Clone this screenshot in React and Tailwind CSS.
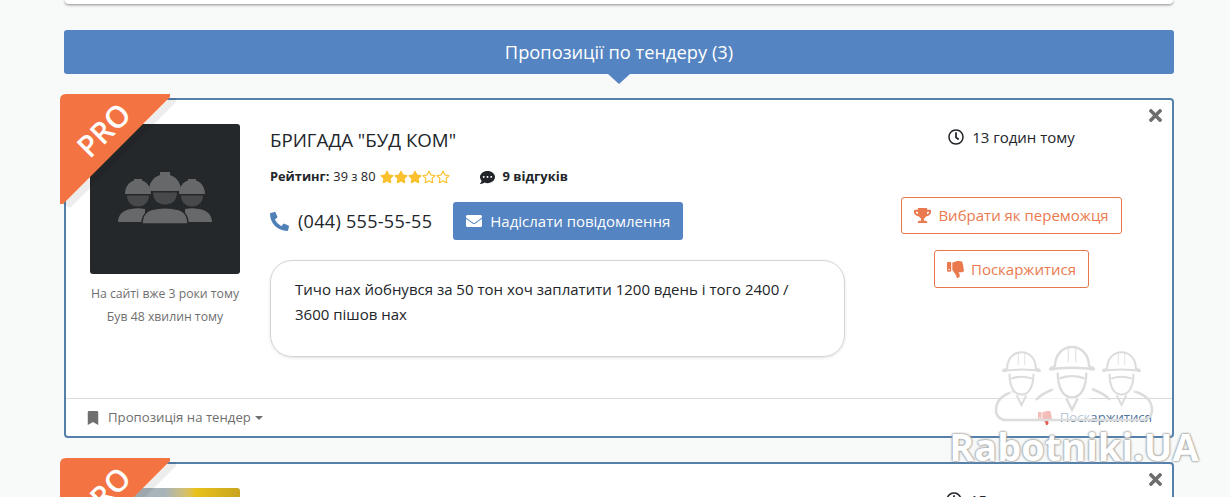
import {
  FaBookmark,
  FaCommentDots,
  FaEnvelope,
  FaPhoneAlt,
  FaRegClock,
  FaRegStar,
  FaStar,
  FaThumbsDown,
  FaTimes,
  FaTrophy,
} from "react-icons/fa";

function Workers({ className }) {
  return (
    <svg viewBox="0 0 94 52" className={className}>
      <g fill="#666869">
        <path d="M0 50c0-7 5-12 13-13 5-1 9-1 14 0v13z" />
        <path d="M94 50c0-7-5-12-13-13-5-1-9-1-14 0v13z" />
        <path d="M7 22c0-7 4-12 9-13.500V7h8v1.500c5 1.500 9 6.500 9 13.500z" />
        <path d="M61 22c0-7 4-12 9-13.500V7h8v1.500c5 1.500 9 6.500 9 13.500z" />
      </g>
      <g fill="#48494a">
        <path d="M9 23.500h22c0 6-4 11-11 11S9 29.500 9 23.500z" />
        <path d="M63 23.500h22c0 6-4 11-11 11S63 29.500 63 23.500z" />
      </g>
      <path d="M24 52c0-9 5-14 12-15 7-1.500 15-1.500 22 0 7 1 12 6 12 15z" fill="#666869" stroke="#24282a" strokeWidth="1.500" />
      <path d="M31 19c0-9 5-14 11-16V0h10v3c6 2 11 7 11 16z" fill="#666869" />
      <path d="M35 20.500h24c0 7-4 12-12 12s-12-5-12-12z" fill="#48494a" />
    </svg>
  );
}

function WatermarkMan({ x, y, s }) {
  return (
    <g transform={`translate(${x} ${y}) scale(${s})`}>
      <path d="M-21 25c0-8-1-19 2-26-1-12 7-22 19-23 12 1 20 11 19 23 3 7 2 18 2 26l-9 7c-5 6-19 6-24 0z" fill="#fff" fillOpacity="0.55" stroke="none" />
      <path d="M-18 0c0-13 8-21 18-21s18 8 18 21" />
      <path d="M-23 3c8-3 38-3 46 0" />
      <path d="M-23 3c-1-2 2-3 5-3M23 3c1-2-2-3-5-3" />
      <path d="M-15 6c0 15 5 26 15 26s15-11 15-26" />
      <path d="M-13 12c8-3 18-3 26 0" />
      <path d="M-4-21v16M4-21v16" strokeWidth="1" />
      <path d="M-6 33l6 12 6-12" />
    </g>
  );
}

function Watermark() {
  return (
    <div className="pointer-events-none absolute left-[950px] top-[344px] flex w-[248px] flex-col items-center">
      <svg viewBox="0 0 160 84" className="h-[84px] w-[160px]" fill="none" stroke="#dcdcdc" strokeWidth="2.500">
        <path d="M21 47C10 50 2 56 2 66c0 6 4 10 10 10h84V50H40z" fill="#fff" fillOpacity="0.6" stroke="none" />
        <path d="M21 47C10 50 2 56 2 66c0 6 4 10 10 10h136c6 0 10-4 10-10 0-10-8-16-19-19" />
        <path d="M60 45c-8 3-14 6-18 11M98 45c8 3 14 6 18 11" />
        <WatermarkMan x={27.500} y={25} s={0.8} />
        <WatermarkMan x={127.500} y={25} s={0.8} />
        <WatermarkMan x={78} y={23} s={0.95} />
      </svg>
      <span className="-mt-[3px] whitespace-nowrap font-['Open_Sans',sans-serif] text-[38px] font-bold leading-[42px] text-white [text-shadow:0_0_2px_#999,0_0_2px_#999,0_0_3px_#bbb]">
        Rabotniki.UA
      </span>
    </div>
  );
}

function Ribbon() {
  return (
    <div className="absolute -left-[6px] -top-[6px] h-[116px] w-[116px] overflow-hidden">
      <svg viewBox="0 0 116 116" className="absolute inset-0 h-full w-full">
        <path d="M110 4 L120 4 L10 114 L2 110 Z" fill="#000" fillOpacity="0.07" />
        <path d="M6 0 H110 V3 L3 110 H0 V6 Q0 0 6 0 Z" fill="#f47342" />
      </svg>
      <span className="absolute left-[13px] top-[20px] -rotate-45 font-['Open_Sans',sans-serif] text-[30px] font-semibold leading-[32px] text-white">
        PRO
      </span>
    </div>
  );
}

function Stars({ filled }) {
  return (
    <span className="ml-[5px] inline-flex text-[#fbc02d]">
      {[0, 1, 2, 3, 4].map((i) =>
        i < filled ? <FaStar key={i} size={14} /> : <FaRegStar key={i} size={14} />
      )}
    </span>
  );
}

function OfferCard() {
  return (
    <article className="relative w-[1110px] rounded-[4px] border-2 border-[#5580ab] bg-white">
      <Ribbon />
      <button className="absolute right-[7px] top-[6px] text-[#6d6d6d]">
        <FaTimes size={19} />
      </button>

      <div className="flex h-[298px] pl-[24px] pt-[24px]">
        <div className="w-[150px] shrink-0">
          <div className="flex h-[150px] w-[150px] items-center justify-center rounded-[3px] bg-[#24282a] pb-[2px]">
            <Workers className="h-[52px] w-[94px]" />
          </div>
          <p className="mt-[12px] whitespace-nowrap text-center text-[12.250px] leading-[16px] text-[#6f6f6f]">
            На сайті вже 3 роки тому
          </p>
          <p className="mt-[7px] whitespace-nowrap text-center text-[12.250px] leading-[16px] text-[#6f6f6f]">
            Був 48 хвилин тому
          </p>
        </div>

        <div className="ml-[30px] w-[575px] shrink-0">
          <h3 className="mt-[3px] text-[18.700px] leading-[26px] text-[#212529]">БРИГАДА "БУД КОМ"</h3>
          <div className="mt-[14px] flex h-[20px] items-center text-[12.800px] text-[#212529]">
            <b className="font-bold">Рейтинг:</b>
            <span className="ml-[4px]">39 з 80</span>
            <Stars filled={3} />
            <FaCommentDots size={15} className="ml-[30px]" />
            <b className="ml-[7px] text-[13px] font-bold">9 відгуків</b>
          </div>
          <div className="mt-[15px] flex items-center">
            <FaPhoneAlt size={19} className="text-[#5080b8]" />
            <span className="ml-[9px] mt-[1px] text-[18px] tracking-[0.3px] text-[#212529]">(044) 555-55-55</span>
            <button className="ml-[21px] flex h-[38px] w-[230px] items-center justify-center gap-[8px] rounded-[3px] bg-[#5484c1] text-[15px] text-white">
              <FaEnvelope size={16} />
              Надіслати повідомлення
            </button>
          </div>
          <div className="mt-[20px] h-[97px] rounded-[22px] border border-[#d4d4d4] px-[24px] py-[16px] text-[15px] leading-[25px] text-[#212529] shadow-[0_1px_3px_rgba(0,0,0,0.12)]">
            Тичо нах йобнувся за 50 тон хоч заплатити 1200 вдень і того 2400 / 3600 пішов нах
          </div>
        </div>

        <div className="flex flex-1 flex-col items-center pl-[6px]">
          <div className="mt-[3px] flex h-[20px] items-center gap-[8px] text-[15px] text-[#212529]">
            <FaRegClock size={16} />
            13 годин тому
          </div>
          <button className="mt-[50px] flex h-[37px] items-center gap-[7px] whitespace-nowrap rounded-[3px] border border-[#e5774a] px-[12px] text-[15px] text-[#ea7a4e]">
            <FaTrophy size={17} />
            Вибрати як переможця
          </button>
          <button className="mt-[16px] flex h-[38px] items-center gap-[7px] whitespace-nowrap rounded-[3px] border border-[#e5774a] px-[12px] text-[15px] text-[#ea7a4e]">
            <FaThumbsDown size={17} />
            Поскаржитися
          </button>
        </div>
      </div>

      <div className="flex h-[38px] items-center justify-between border-t border-[#d9d9d9] pl-[20px] pr-[20px] pt-[1px] text-[13.200px]">
        <div className="flex items-center text-[#6f6f6f]">
          <FaBookmark size={14} />
          <span className="ml-[8px]">Пропозиція на тендер</span>
          <span className="ml-[4px] mt-[1px] h-0 w-0 border-x-[4px] border-t-[4px] border-x-transparent border-t-[#6f6f6f]" />
        </div>
        <div className="flex items-center text-[#4f7299]">
          <FaThumbsDown size={14} className="text-[#e05a4e]" />
          <span className="ml-[8px]">Поскаржитися</span>
        </div>
      </div>
    </article>
  );
}

function SecondCard() {
  return (
    <article className="relative mt-[24px] h-[120px] w-[1110px] rounded-[4px] border-2 border-[#5580ab] bg-white">
      <Ribbon />
      <button className="absolute right-[7px] top-[6px] text-[#6d6d6d]">
        <FaTimes size={19} />
      </button>
      <div className="ml-[24px] mt-[24px] h-[96px] w-[150px] rounded-[3px] bg-gradient-to-r from-[#a9b4ba] from-[50%] via-[#e8c21a] via-[70%] to-[#c9a520]" />
      <div className="absolute left-[880px] top-[25px] flex items-center gap-[8px] text-[15px] text-[#212529]">
        <FaRegClock size={16} />
        15 годин тому
      </div>
    </article>
  );
}

export default function App() {
  return (
    <div className="relative h-[497px] w-[1230px] overflow-hidden bg-[#f8f9f9] font-['Open_Sans',sans-serif]">
      <div className="ml-[65px] h-[4px] w-[1108px] rounded-b-[4px] bg-white shadow-[0_1px_3px_rgba(0,0,0,0.45)]" />

      <div className="ml-[64px] mt-[26px] w-[1110px]">
        <div className="relative flex h-[44px] items-center justify-center rounded-[3px] bg-[#5484c1] text-[18.300px] text-white">
          Пропозиції по тендеру (3)
          <span className="absolute left-[544px] top-[44px] h-0 w-0 border-x-[11px] border-t-[10px] border-x-transparent border-t-[#5484c1]" />
        </div>

        <div className="mt-[24px]">
          <OfferCard />
          <SecondCard />
        </div>
      </div>

      <Watermark />
    </div>
  );
}
